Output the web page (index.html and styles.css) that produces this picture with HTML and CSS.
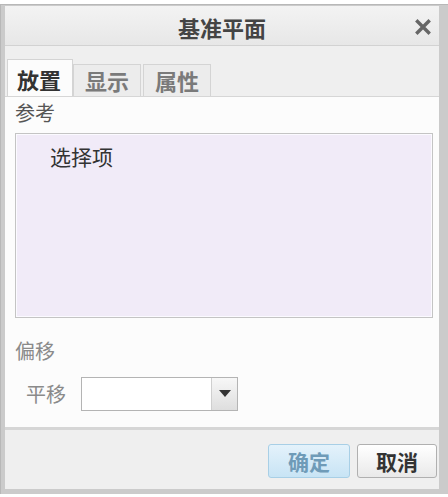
FILE: index.html
```html
<!DOCTYPE html>
<html lang="zh">
<head>
<meta charset="utf-8">
<title>基准平面</title>
<link rel="stylesheet" href="styles.css">
</head>
<body>
<div class="dialog">
  <div class="window">
    <div class="titlebar">
      <span class="title">基准平面</span>
      <svg class="close" width="18" height="18" viewBox="0 0 18 18"><path d="M3.5 3.5 L14.5 14.5 M14.5 3.5 L3.5 14.5" stroke="#666" stroke-width="3.4" stroke-linecap="square"/></svg>
    </div>
    <div class="tabs">
      <div class="tab active">放置</div>
      <div class="tab">显示</div>
      <div class="tab">属性</div>
    </div>
    <div class="panel">
      <div class="label">参考</div>
      <div class="listbox"><span class="item">选择项</span></div>
      <div class="label muted offset">偏移</div>
      <div class="row">
        <span class="rowlabel">平移</span>
        <div class="combo">
          <div class="field"></div>
          <div class="arrow"><svg width="12" height="8" viewBox="0 0 12 8"><path d="M0 0 H12 L6 7 Z" fill="#333"/></svg></div>
        </div>
      </div>
    </div>
    <div class="footer">
      <button class="btn ok">确定</button>
      <button class="btn cancel">取消</button>
    </div>
  </div>
</div>
</body>
</html>
```
FILE: styles.css
```css
html, body {
  margin: 0;
  padding: 0;
  background: #ffffff;
}
body {
  width: 448px;
  height: 497px;
  overflow: hidden;
  font-family: "Noto Sans CJK SC", "Noto Sans", sans-serif;
}
.dialog {
  margin-top: 4px;
  height: 490px;
  box-sizing: border-box;
  background: #cbcbcb;
  border-top: 1px solid #b8b8b8;
  border-left: 1px solid #b8b8b8;
  padding: 1px 9px 5px 4px;
}
.window {
  height: 100%;
  display: flex;
  flex-direction: column;
  background: #efefef;
}
.titlebar {
  height: 39px;
  flex: none;
  display: flex;
  align-items: center;
  justify-content: center;
  position: relative;
  background: linear-gradient(#f3f3f3, #e7e7e7);
  border-bottom: 1px solid #d2d2d2;
}
.title {
  font-size: 22px;
  font-weight: bold;
  color: #444;
  line-height: 24px;
  margin-top: 2px;
}
.close {
  position: absolute;
  right: 7px;
  top: 12px;
}
.tabs {
  height: 50px;
  flex: none;
  display: flex;
  align-items: flex-end;
  padding-left: 2px;
  background: #efefef;
}
.tab {
  height: 32px;
  width: 68px;
  box-sizing: border-box;
  border: 1px solid #d4d4d4;
  border-bottom: none;
  background: #ececec;
  font-size: 22px;
  font-weight: bold;
  color: #7a7a7a;
  line-height: 30px;
  text-align: center;
  margin-right: 2px;
}
.tab.active {
  height: 37px;
  width: 66px;
  background: #fcfcfc;
  color: #333;
  line-height: 38px;
  margin-right: 0;
  padding-right: 2px;
}
.panel {
  height: 334px;
  flex: none;
  box-sizing: border-box;
  background: #fcfcfc;
  border-top: 1px solid #d6d6d6;
  border-bottom: 3px solid #d6d6d6;
  padding: 4px 6px 0 10px;
}
.label {
  font-size: 20px;
  line-height: 24px;
  color: #555;
}
.label.muted {
  color: #8a8a8a;
}
.offset {
  margin-top: 21px;
}
.listbox {
  margin-top: 8px;
  height: 185px;
  width: 418px;
  box-sizing: border-box;
  background: #f1ebf8;
  border: 1px solid #c4c4c4;
  box-shadow: inset 0 0 0 1px #fbfaff;
  padding: 10px 0 0 34px;
}
.item {
  font-size: 21px;
  line-height: 24px;
  color: #333;
}
.row {
  display: flex;
  align-items: center;
  margin-top: 14px;
  padding-left: 11px;
}
.rowlabel {
  font-size: 20px;
  color: #8a8a8a;
  width: 55px;
  line-height: 24px;
}
.combo {
  display: flex;
  width: 157px;
  height: 34px;
  box-sizing: border-box;
  border: 1px solid #b4b4b4;
  background: #fff;
}
.field {
  flex: 1;
}
.arrow {
  width: 25px;
  border-left: 1px solid #cfcfcf;
  background: linear-gradient(#f7f7f7, #dedede);
  display: flex;
  align-items: center;
  justify-content: center;
}
.footer {
  flex: 1;
  display: flex;
  justify-content: flex-end;
  align-items: flex-start;
  gap: 7px;
  padding: 14px 2px 0 0;
  background: #efefef;
}
.btn {
  width: 82px;
  height: 34px;
  box-sizing: border-box;
  font-family: "Noto Sans CJK SC", "Noto Sans", sans-serif;
  font-size: 21px;
  font-weight: bold;
  line-height: 30px;
  padding: 0;
  border-radius: 3px;
}
.btn.ok {
  background: linear-gradient(#e4f2fb, #c8e4f5);
  border: 1px solid #a8cfe6;
  color: #6f9bb8;
}
.btn.cancel {
  width: 80px;
  background: linear-gradient(#ffffff, #e9e9e9);
  border: 1px solid #b0b0b0;
  color: #333;
}
```
